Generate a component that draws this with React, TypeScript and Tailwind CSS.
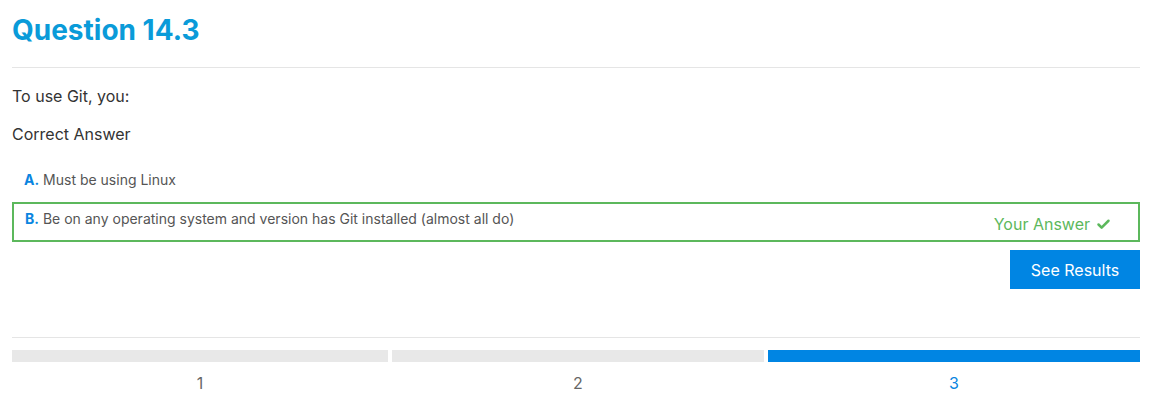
import { Check } from 'lucide-react'

const options = [
  { letter: 'A', text: 'Must be using Linux', chosen: false },
  { letter: 'B', text: 'Be on any operating system and version has Git installed (almost all do)', chosen: true },
]

const steps = [1, 2, 3]
const current = 3

export default function App() {
  return (
    <div className="bg-white pl-3 pr-[13px] font-['Inter',sans-serif] text-[#333]">
      <h1 className="pt-[13px] pb-[20px] text-[28px] font-bold leading-[34px] text-[#0a9bd9]">
        Question 14.3
      </h1>
      <hr className="border-[#e5e5e5]" />
      <p className="mt-[18px] text-[16px] leading-[20px]">To use Git, you:</p>
      <p className="mt-[18px] text-[16px] leading-[20px]">Correct Answer</p>

      <div className="mt-[19px] flex flex-col gap-[5px]">
        {options.map((o) =>
          o.chosen ? (
            <div
              key={o.letter}
              className="flex h-[40px] items-start justify-between border-2 border-[#5cb85c] pl-[11px] pr-[27px]"
            >
              <span className="pt-[5px] text-[14px] leading-[20px] text-[#555]">
                <b className="text-[#0a85e0]">{o.letter}.</b> {o.text}
              </span>
              <span className="flex items-center gap-[6px] pt-[10px] text-[16px] leading-[20px] text-[#5cb85c]">
                Your Answer
                <Check className="h-[15px] w-[15px]" strokeWidth={4} />
              </span>
            </div>
          ) : (
            <div key={o.letter} className="flex h-[34px] items-center pl-[12px]">
              <span className="text-[14px] leading-[20px] text-[#555]">
                <b className="text-[#0a85e0]">{o.letter}.</b> {o.text}
              </span>
            </div>
          ),
        )}
      </div>

      <div className="mt-[8px] flex justify-end">
        <button
          type="button"
          className="h-[39px] w-[130px] bg-[#0085e3] text-[16px] text-white"
        >
          See Results
        </button>
      </div>

      <hr className="mt-[48px] border-[#e5e5e5]" />

      <div className="mt-[12px] grid grid-cols-[376px_1fr_1fr] gap-1">
        {steps.map((s) => (
          <div key={s} className="flex flex-col items-center">
            <div className={`h-[12px] w-full ${s === current ? 'bg-[#0085e3]' : 'bg-[#e8e8e8]'}`} />
            <span
              className={`mt-[12px] text-[16px] leading-[18px] ${s === current ? 'text-[#0a85e0]' : 'text-[#666]'}`}
            >
              {s}
            </span>
          </div>
        ))}
      </div>
    </div>
  )
}
